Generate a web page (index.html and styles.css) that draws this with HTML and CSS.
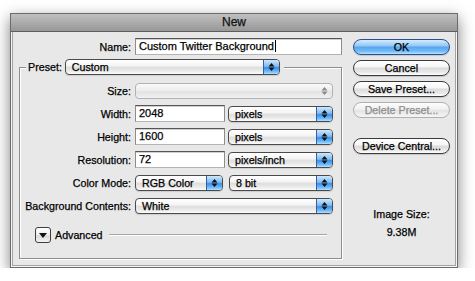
FILE: index.html
```html
<!DOCTYPE html>
<html>
<head>
<meta charset="utf-8">
<link rel="stylesheet" href="styles.css">
</head>
<body>
<div class="window">
  <div class="titlebar">New</div>
  <div class="content">
    <div class="left">
      <div class="row">
        <label class="lbl">Name:</label>
        <div class="field name">Custom Twitter Background<span class="caret"></span></div>
      </div>
      <fieldset class="group">
        <legend class="legend">
          <span class="legend-lbl">Preset:</span>
          <div class="popup w-preset"><span class="val">Custom</span><span class="arrows"><svg width="7" height="10" viewBox="0 0 7 10"><path d="M3.5 1L6.5 4.5H0.5Z M0.5 5.5H6.5L3.5 9Z"/></svg></span></div>
        </legend>
        <div class="rows">
          <div class="row">
            <label class="lbl">Size:</label>
            <div class="popup disabled w-full"><span class="val"></span><span class="arrows"><svg width="7" height="10" viewBox="0 0 7 10"><path d="M3.5 1L6.5 4.5H0.5Z M0.5 5.5H6.5L3.5 9Z"/></svg></span></div>
          </div>
          <div class="row">
            <label class="lbl">Width:</label>
            <div class="field w-num">2048</div>
            <div class="popup w-unit"><span class="val">pixels</span><span class="arrows"><svg width="7" height="10" viewBox="0 0 7 10"><path d="M3.5 1L6.5 4.5H0.5Z M0.5 5.5H6.5L3.5 9Z"/></svg></span></div>
          </div>
          <div class="row">
            <label class="lbl">Height:</label>
            <div class="field w-num">1600</div>
            <div class="popup w-unit"><span class="val">pixels</span><span class="arrows"><svg width="7" height="10" viewBox="0 0 7 10"><path d="M3.5 1L6.5 4.5H0.5Z M0.5 5.5H6.5L3.5 9Z"/></svg></span></div>
          </div>
          <div class="row">
            <label class="lbl">Resolution:</label>
            <div class="field w-num">72</div>
            <div class="popup w-unit"><span class="val">pixels/inch</span><span class="arrows"><svg width="7" height="10" viewBox="0 0 7 10"><path d="M3.5 1L6.5 4.5H0.5Z M0.5 5.5H6.5L3.5 9Z"/></svg></span></div>
          </div>
          <div class="row">
            <label class="lbl">Color Mode:</label>
            <div class="popup w-mode"><span class="val">RGB Color</span><span class="arrows"><svg width="7" height="10" viewBox="0 0 7 10"><path d="M3.5 1L6.5 4.5H0.5Z M0.5 5.5H6.5L3.5 9Z"/></svg></span></div>
            <div class="popup w-bits"><span class="val">8 bit</span><span class="arrows"><svg width="7" height="10" viewBox="0 0 7 10"><path d="M3.5 1L6.5 4.5H0.5Z M0.5 5.5H6.5L3.5 9Z"/></svg></span></div>
          </div>
          <div class="row">
            <label class="lbl">Background Contents:</label>
            <div class="popup w-full"><span class="val">White</span><span class="arrows"><svg width="7" height="10" viewBox="0 0 7 10"><path d="M3.5 1L6.5 4.5H0.5Z M0.5 5.5H6.5L3.5 9Z"/></svg></span></div>
          </div>
        </div>
        <div class="advanced">
          <span class="disclosure"><svg width="8" height="5" viewBox="0 0 8 5"><path d="M0 0H8L4 5Z"/></svg></span>
          <span class="adv-lbl">Advanced</span>
          <span class="sep"></span>
        </div>
      </fieldset>
    </div>
    <div class="right">
      <div class="btn default">OK</div>
      <div class="btn">Cancel</div>
      <div class="btn">Save Preset...</div>
      <div class="btn disabled">Delete Preset...</div>
      <div class="btn central">Device Central...</div>
      <div class="info">Image Size:</div>
      <div class="info size">9.38M</div>
    </div>
  </div>
</div>
</body>
</html>
```

FILE: styles.css
```css
* { box-sizing: border-box; }
html, body { margin: 0; background: #fff; }
body {
  padding: 13px 0 0 10px;
  font-family: "Liberation Sans", Arial, sans-serif;
  font-size: 10.7px;
  color: #000;
  -webkit-text-stroke: 0.25px currentColor;
}
.window {
  width: 448px;
  height: 255px;
  border: 1px solid #6c6c6c;
  background: #f6f6f6;
  box-shadow: 0 5px 14px rgba(0,0,0,.5);
  display: flex;
  flex-direction: column;
}
.titlebar {
  height: 18px;
  border-bottom: 1px solid #5e5e5e;
  background: linear-gradient(#c0c0c0, #979797);
  text-align: center;
  font-size: 12px;
  line-height: 17px;
  color: #111;
}
.content {
  flex: 1;
  margin: 0 1px 1px;
  border: 1px solid #a3a3a3;
  border-top: 0;
  background: #e8e8e8;
  display: flex;
  padding: 6px 5px 0 6px;
}
.left { width: 323px; }
.right {
  width: 97px;
  margin-left: 11px;
  margin-top: 1px;
  display: flex;
  flex-direction: column;
}
.row {
  display: flex;
  align-items: center;
  height: 17px;
}
.lbl {
  width: 112px;
  text-align: right;
  margin-right: 4px;
  white-space: nowrap;
}
.group .lbl { width: 111px; }
.field {
  height: 17px;
  background: #fff;
  border: 1px solid #8c8c8c;
  border-top-color: #555;
  border-bottom-color: #b4b4b4;
  box-shadow: inset 0 1px 0 #d0d0d0;
  padding-left: 3px;
  line-height: 15px;
  font-size: 11px;
  white-space: nowrap;
}
.name { width: 207px; }
.caret {
  display: inline-block;
  width: 1px;
  height: 12px;
  background: #000;
  vertical-align: -2px;
  margin-left: 1px;
}
.group {
  margin: 4px 0 0;
  padding: 7px 0 15px;
  width: 323px;
  border: 1px solid #8e8e8e;
  box-shadow: 1px 1px 0 #fff, inset 1px 1px 0 #fff;
  min-width: 0;
}
.legend {
  margin-left: 6px;
  padding: 0 4px 0 2px;
  display: flex;
  align-items: center;
  background: #e8e8e8;
  height: 16px;
}
.legend-lbl { margin-right: 3px; }
.rows {
  display: flex;
  flex-direction: column;
  gap: 6px;
}
.popup {
  display: flex;
  height: 16px;
  border: 1px solid #4a4a4a;
  border-radius: 4px;
  background: linear-gradient(#fff 0%, #f4f4f4 40%, #dedede 55%, #ececec 80%, #fbfbfb 100%);
  box-shadow: 0 1px 1px rgba(0,0,0,.12);
  overflow: hidden;
}
.popup .val {
  flex: 1;
  padding-left: 6px;
  line-height: 14px;
  white-space: nowrap;
}
.popup .arrows {
  width: 16px;
  border-left: 1px solid #35609f;
  background: linear-gradient(#cfe8ff 0%, #7cbaf2 45%, #3d8de4 55%, #74c0ff 85%, #b4e2ff 100%);
  display: flex;
  align-items: center;
  justify-content: center;
}
.popup .arrows svg { fill: #111; }
.popup.disabled {
  border-color: #b2b2b2;
  background: linear-gradient(#fafafa, #ececec 50%, #e2e2e2 55%, #f2f2f2);
  box-shadow: none;
}
.popup.disabled .arrows {
  border-left: 0;
  background: none;
}
.popup.disabled .arrows svg { fill: #8a8a8a; }
.w-preset { width: 215px; }
.w-full { width: 198px; }
.w-num { width: 90px; }
.w-unit { width: 105px; margin-left: 3px; }
.w-mode { width: 88px; }
.w-bits { width: 104px; margin-left: 6px; }
.advanced {
  display: flex;
  align-items: center;
  margin-top: 13px;
  padding-left: 15px;
  padding-right: 14px;
  height: 16px;
}
.disclosure {
  width: 16px;
  height: 16px;
  border: 1px solid #3e3e3e;
  border-radius: 3px;
  background: linear-gradient(#fff, #ececec 50%, #d9d9d9 55%, #f4f4f4);
  display: flex;
  align-items: center;
  justify-content: center;
}
.disclosure svg { fill: #111; }
.adv-lbl { margin-left: 4px; }
.sep {
  flex: 1;
  margin-left: 6px;
  border-top: 1px solid #a6a6a6;
  border-bottom: 1px solid #fff;
}
.btn {
  height: 16px;
  margin-bottom: 5px;
  border: 1px solid #3a3a3a;
  border-radius: 8px;
  background: linear-gradient(#fff 0%, #f6f6f6 40%, #dcdcdc 52%, #e9e9e9 80%, #fff 100%);
  box-shadow: 0 1px 1px rgba(0,0,0,.15);
  text-align: center;
  line-height: 14px;
  white-space: nowrap;
}
.btn.default {
  border-color: #2b4f8c;
  background: linear-gradient(#d6ecff 0%, #96c9f5 40%, #5aa6ee 52%, #6fbaf8 80%, #b6e3ff 100%);
}
.btn.disabled {
  border-color: #b0b0b0;
  color: #8e8e8e;
  box-shadow: none;
  background: linear-gradient(#fdfdfd, #f0f0f0 45%, #e4e4e4 55%, #f6f6f6);
}
.btn.central { margin-top: 15px; }
.info {
  text-align: center;
  line-height: 14px;
  margin-top: 48px;
}
.info.size { margin-top: 4px; }
```
